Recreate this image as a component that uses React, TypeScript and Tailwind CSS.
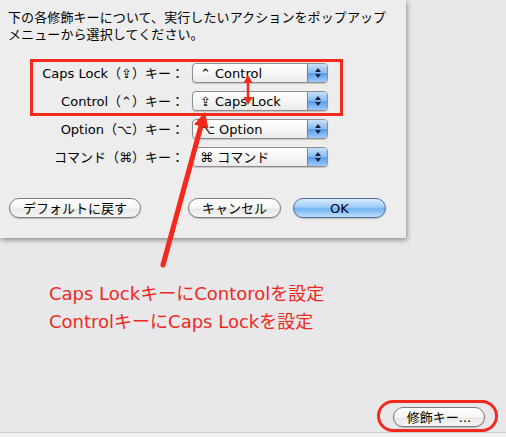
import React from 'react';

const ui = "font-['DejaVu_Sans','Noto_Sans_CJK_JP',sans-serif]";

const rows = [
  { label: 'Caps Lock（⇪）キー：', value: '⌃ Control' },
  { label: 'Control（⌃）キー：', value: '⇪ Caps Lock' },
  { label: 'Option（⌥）キー：', value: '⌥ Option' },
  { label: 'コマンド（⌘）キー：', value: '⌘ コマンド' },
];

function Popup({ value }: { value: string }) {
  return (
    <div className="flex h-[20px] w-[136px] items-center overflow-hidden rounded-[4px] border border-[#8e8e8e] bg-[linear-gradient(to_bottom,#ffffff,#f6f6f6_50%,#eaeaea)] shadow-[0_1px_1px_rgba(0,0,0,0.18)]">
      <span className="flex-1 whitespace-nowrap pl-[7px] text-[13px] leading-none text-black">{value}</span>
      <div className="flex h-full w-[20px] flex-col items-center justify-center gap-[2px] border-l border-[#5d86c4] bg-[linear-gradient(to_bottom,#c9e1fb,#86b9f1_50%,#5b9be9_52%,#9fcaf7)]">
        <span className="h-0 w-0 border-x-[3px] border-b-[4px] border-x-transparent border-b-[#15233a]" />
        <span className="h-0 w-0 border-x-[3px] border-t-[4px] border-x-transparent border-t-[#15233a]" />
      </div>
    </div>
  );
}

function AquaButton({ label, className, primary }: { label: string; className: string; primary?: boolean }) {
  return (
    <div
      className={
        'flex h-[20px] items-center justify-center whitespace-nowrap rounded-full border text-[13px] leading-none text-black shadow-[0_1px_1px_rgba(0,0,0,0.2)] ' +
        (primary
          ? 'border-[#4f6d9c] bg-[linear-gradient(to_bottom,#d9ebfd,#9ccbf7_45%,#72b2f1_55%,#bfe0fc)] '
          : 'border-[#7c7c7c] bg-[linear-gradient(to_bottom,#ffffff,#f7f7f7_50%,#e8e8e8_55%,#f6f6f6)] ') +
        className
      }
    >
      {label}
    </div>
  );
}

export default function App() {
  return (
    <div className={`relative flex h-[437px] w-[506px] flex-col overflow-hidden bg-[#e8e7ea] ${ui}`}>
      {/* sheet */}
      <div className="relative h-[238px] w-[406px] shrink-0 bg-[#ededed] px-2 pt-[9px] shadow-[1px_2px_5px_rgba(0,0,0,0.4)]">
        <p className="whitespace-nowrap text-[13px] leading-[17px] tracking-[0.1px] text-black">
          下の各修飾キーについて、実行したいアクションをポップアップ
          <br />
          メニューから選択してください。
        </p>

        <div className="mt-[20px] grid grid-cols-[176px_136px] items-center gap-x-2 gap-y-2">
          {rows.map((r) => (
            <React.Fragment key={r.label}>
              <span className="whitespace-nowrap text-right text-[13px] leading-none text-black">{r.label}</span>
              <Popup value={r.value} />
            </React.Fragment>
          ))}
        </div>

        <div className="mt-[31px] flex items-center pl-[1px]">
          <AquaButton label="デフォルトに戻す" className="w-[132px]" />
          <AquaButton label="キャンセル" className="ml-[47px] w-[93px]" />
          <AquaButton label="OK" className="ml-[12px] w-[93px]" primary />
        </div>
      </div>

      {/* annotation text */}
      <div className="mt-[42px] pl-[49px] text-[18px] leading-[28px] text-[#ee2a1e]">
        <p>Caps LockキーにContorolを設定</p>
        <p>ControlキーにCaps Lockを設定</p>
      </div>

      <div className="flex-1" />

      <div className="flex justify-end pr-[21px]">
        <AquaButton label="修飾キー..." className="w-[92px]" />
      </div>
      <div className="mt-[5px] h-[5px] shrink-0 border-t border-[#d2d2d4] bg-[#f1f1f2]" />

      {/* red annotations */}
      <div className="pointer-events-none absolute left-[30px] top-[59px] h-[57px] w-[313px] border-[3px] border-[#f2291b]" />
      <div className="pointer-events-none absolute left-[377px] top-[400px] h-[32px] w-[121px] rounded-full border-[3px] border-[#f2291b]" />
      <svg className="pointer-events-none absolute left-0 top-0" width="506" height="437" viewBox="0 0 506 437">
        <line x1="163" y1="265" x2="201" y2="126" stroke="#f2291b" strokeWidth="5" strokeLinecap="round" />
        <polygon points="205,112 208.5,128.5 194,124.5" fill="#f2291b" />
        <line x1="248" y1="81" x2="248" y2="99" stroke="#f2291b" strokeWidth="2.5" />
        <polygon points="248,75 252.5,83 243.5,83" fill="#f2291b" />
        <polygon points="248,105 252.5,97 243.5,97" fill="#f2291b" />
      </svg>
    </div>
  );
}
